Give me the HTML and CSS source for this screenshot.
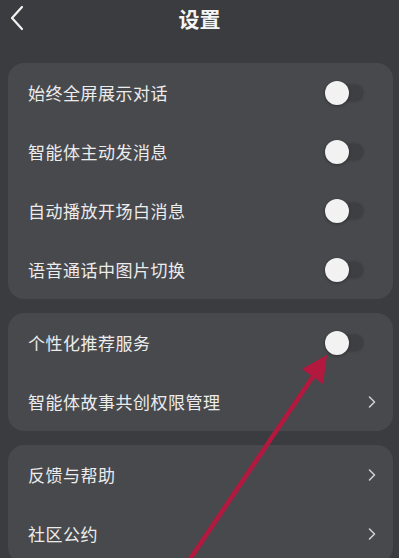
FILE: index.html
```html
<!DOCTYPE html>
<html lang="zh-CN">
<head>
<meta charset="utf-8">
<title>设置</title>
<link rel="stylesheet" href="styles.css">
</head>
<body>
<div class="page">
  <header class="header">
    <svg class="back" width="16" height="26" viewBox="0 0 16 26"><path d="M13 2 L3 13 L13 24" fill="none" stroke="#f2f2f2" stroke-width="2.2" stroke-linecap="round" stroke-linejoin="round"/></svg>
    <h1 class="title">设置</h1>
  </header>
  <section class="card">
    <div class="row"><span class="label">始终全屏展示对话</span><span class="toggle"><span class="knob"></span></span></div>
    <div class="row"><span class="label">智能体主动发消息</span><span class="toggle"><span class="knob"></span></span></div>
    <div class="row"><span class="label">自动播放开场白消息</span><span class="toggle"><span class="knob"></span></span></div>
    <div class="row"><span class="label">语音通话中图片切换</span><span class="toggle"><span class="knob"></span></span></div>
  </section>
  <section class="card">
    <div class="row"><span class="label">个性化推荐服务</span><span class="toggle"><span class="knob"></span></span></div>
    <div class="row"><span class="label">智能体故事共创权限管理</span><svg class="chev" width="10" height="14" viewBox="0 0 10 14"><path d="M2.5 2 L7.5 7 L2.5 12" fill="none" stroke="#cfcfcf" stroke-width="1.6" stroke-linecap="round" stroke-linejoin="round"/></svg></div>
  </section>
  <section class="card">
    <div class="row"><span class="label">反馈与帮助</span><svg class="chev" width="10" height="14" viewBox="0 0 10 14"><path d="M2.5 2 L7.5 7 L2.5 12" fill="none" stroke="#cfcfcf" stroke-width="1.6" stroke-linecap="round" stroke-linejoin="round"/></svg></div>
    <div class="row"><span class="label">社区公约</span><svg class="chev" width="10" height="14" viewBox="0 0 10 14"><path d="M2.5 2 L7.5 7 L2.5 12" fill="none" stroke="#cfcfcf" stroke-width="1.6" stroke-linecap="round" stroke-linejoin="round"/></svg></div>
  </section>
  <svg class="arrow" width="399" height="558" viewBox="0 0 399 558">
    <line x1="188" y1="562" x2="316" y2="372" stroke="#b3193f" stroke-width="4.5" stroke-linecap="round"/>
    <polygon points="327,355 323,384 302,369" fill="#b3193f"/>
  </svg>
</div>
</body>
</html>
```
FILE: styles.css
```css
html, body {
  margin: 0;
  padding: 0;
  background: #3b3c3f;
  overflow: hidden;
}
.page {
  position: relative;
  width: 399px;
  height: 558px;
  overflow: hidden;
  font-family: "Noto Sans CJK SC", "Noto Sans", sans-serif;
  color: #ececec;
  display: flex;
  flex-direction: column;
  gap: 14px;
}
.header {
  position: relative;
  height: 49px;
  flex-shrink: 0;
  display: flex;
  align-items: flex-start;
  justify-content: center;
}
.back {
  position: absolute;
  left: 9px;
  top: 5px;
}
.title {
  margin: 0;
  font-size: 21px;
  font-weight: 700;
  line-height: 36px;
  color: #f4f4f4;
}
.card {
  margin: 0 6px 0 8px;
  background: #48494d;
  border-radius: 16px;
  display: flex;
  flex-direction: column;
  flex-shrink: 0;
}
.row {
  height: 59px;
  display: flex;
  align-items: center;
  justify-content: space-between;
  padding: 0 16px 0 20px;
}
.label {
  font-size: 17px;
  letter-spacing: 0.5px;
  color: #ececec;
}
.toggle {
  position: relative;
  width: 37px;
  height: 16px;
  border-radius: 8px;
  background: #3e3f42;
  margin-right: 14px;
  box-shadow: 0 0 3px rgba(0,0,0,0.25);
}
.knob {
  position: absolute;
  left: -1px;
  top: -4px;
  width: 24px;
  height: 24px;
  border-radius: 50%;
  background: #f2f2f3;
  box-shadow: 0 1px 3px rgba(0,0,0,0.35);
}
.chev {
  margin-right: 0;
}
.arrow {
  position: absolute;
  left: 0;
  top: 0;
  pointer-events: none;
}
```
